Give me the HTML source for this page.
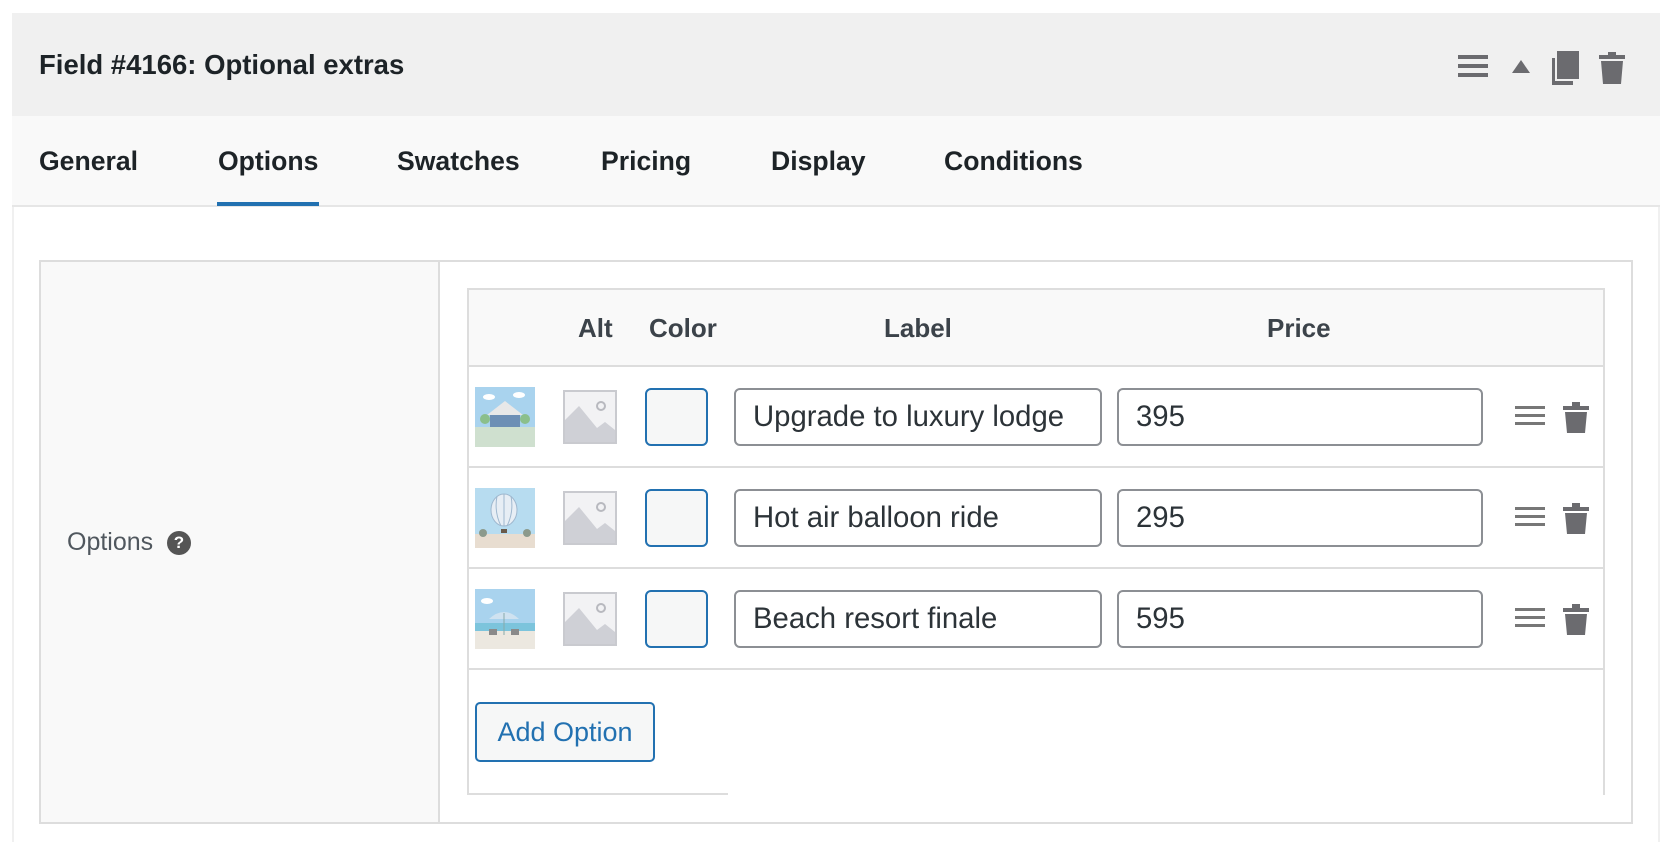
<!DOCTYPE html>
<html><head><meta charset="utf-8"><style>
*{margin:0;padding:0;box-sizing:border-box}
body{width:1674px;height:842px;background:#fff;position:relative;overflow:hidden;font-family:"Liberation Sans",sans-serif}
.a{position:absolute}
.hdr{left:12px;top:13px;width:1648px;height:103px;background:#f0f0f0}
.tabs{left:12px;top:116px;width:1648px;height:91px;background:#f9f9f9;border-bottom:2px solid #e6e6e6}
.body{left:12px;top:207px;width:1648px;height:635px;border-left:2px solid #f0f0f0;border-right:2px solid #f0f0f0}
.tab{top:146px;font-weight:bold;font-size:26.6px;color:#1d2327}
.box{left:39px;top:260px;width:1594px;height:564px;border:2px solid #ddd}
.lcol{left:41px;top:262px;width:399px;height:560px;background:#f9f9f9;border-right:2px solid #ddd}
.th{top:313px;font-weight:bold;font-size:26px;color:#3c434a}
.inp{height:58px;border:2px solid #8c8f94;border-radius:6px;background:#fff;font-size:29.3px;color:#2c3338;padding-left:17px;line-height:54px}
.sw{left:645px;width:63px;height:58px;border:2px solid #2271b1;border-radius:6px;background:#f6f7f7}
.thumb{left:475px;width:60px;height:60px}
.ph{left:563px;width:54px;height:54px}
.sep{left:468px;width:1137px;height:2px;background:#ddd}
</style></head><body>
<div class="a hdr"></div>
<div class="a" style="left:39px;top:49px;font-weight:bold;font-size:27.5px;color:#1d2327">Field #4166: Optional extras</div>
<svg class="a" style="left:1458px;top:55px" width="30" height="22"><rect y="0" width="30" height="4" fill="#6b6b6f"/><rect y="9" width="30" height="4" fill="#6b6b6f"/><rect y="18" width="30" height="4" fill="#6b6b6f"/></svg>
<svg class="a" style="left:1512px;top:60px" width="18" height="14"><path d="M9 0L18 13H0Z" fill="#6b6b6f"/></svg>
<svg class="a" style="left:1552px;top:50px" width="28" height="35"><rect x="0" y="8" width="21" height="27" fill="#6b6b6f"/><rect x="4" y="0" width="24" height="30" fill="#6b6b6f" stroke="#f0f0f0" stroke-width="2"/></svg>
<svg class="a" style="left:1598px;top:50px" width="28" height="34"><path d="M10 2h8v3h9v4H1V5h9z" fill="#6b6b6f"/><path d="M3 11h22l-2 23H5z" fill="#6b6b6f"/></svg>
<div class="a tabs"></div>
<div class="a tab" style="left:39px">General</div>
<div class="a tab" style="left:218px">Options</div>
<div class="a tab" style="left:397px">Swatches</div>
<div class="a tab" style="left:601px">Pricing</div>
<div class="a tab" style="left:771px">Display</div>
<div class="a tab" style="left:944px">Conditions</div>
<div class="a" style="left:217px;top:202px;width:102px;height:4px;background:#2271b1"></div>
<div class="a body"></div>
<div class="a box"></div>
<div class="a lcol"></div>
<div class="a" style="left:67px;top:528px;font-size:25px;color:#50575e">Options</div>
<div class="a" style="left:167px;top:531px;width:24px;height:24px;border-radius:50%;background:#555;color:#fff;font-weight:bold;font-size:17px;text-align:center;line-height:24px">?</div>
<div class="a" style="left:468px;top:288px;width:1137px;height:78px;background:#f9f9f9;border-top:2px solid #ddd"></div>
<div class="a" style="left:467px;top:288px;width:2px;height:507px;background:#ddd"></div>
<div class="a" style="left:1603px;top:288px;width:2px;height:507px;background:#ddd"></div>
<div class="a" style="left:467px;top:793px;width:261px;height:2px;background:#ddd"></div>
<div class="a th" style="left:578px">Alt</div>
<div class="a th" style="left:649px">Color</div>
<div class="a th" style="left:884px">Label</div>
<div class="a th" style="left:1267px">Price</div>
<div class="a sep" style="top:365px"></div>
<div class="a sep" style="top:466px"></div>
<div class="a sep" style="top:567px"></div>
<div class="a sep" style="top:668px"></div>

<svg class="a thumb" style="top:387px" viewBox="0 0 60 60"><rect width="60" height="60" fill="#a9d3ee"/><rect y="40" width="60" height="20" fill="#cfe0cf"/><path d="M12 28L30 14L48 28Z" fill="#e8e8e8"/><rect x="15" y="28" width="30" height="12" fill="#6d8fb5"/><circle cx="10" cy="32" r="5" fill="#8bbf8b"/><circle cx="50" cy="32" r="5" fill="#8bbf8b"/><ellipse cx="14" cy="10" rx="6" ry="3" fill="#fff"/><ellipse cx="44" cy="8" rx="6" ry="3" fill="#fff"/></svg>
<svg class="a ph" style="top:390px" viewBox="0 0 54 54"><rect x="1" y="1" width="52" height="52" fill="#f2f2f4" stroke="#c9cacf" stroke-width="2"/><path d="M2 30L16 16L34 38L42 32L52 40V52H2Z" fill="#cfd0d6"/><circle cx="38" cy="16" r="4" fill="none" stroke="#b8b9bf" stroke-width="2"/></svg>
<div class="a sw" style="top:388px"></div>
<div class="a inp" style="left:734px;top:388px;width:368px">Upgrade to luxury lodge</div>
<div class="a inp" style="left:1117px;top:388px;width:366px">395</div>
<svg class="a thumb" style="top:488px" viewBox="0 0 60 60"><rect width="60" height="60" fill="#b7dcf0"/><rect y="46" width="60" height="14" fill="#e8ddd0"/><ellipse cx="29" cy="22" rx="13" ry="16" fill="#e7eef5" stroke="#9fb8cf"/><path d="M29 6V38M22 8Q19 24 26 38M36 8Q39 24 32 38" stroke="#9fb8cf" fill="none"/><rect x="26" y="41" width="6" height="4" fill="#6a5a4a"/><circle cx="8" cy="45" r="4" fill="#8c9a8c"/><circle cx="52" cy="45" r="4" fill="#8c9a8c"/></svg>
<svg class="a ph" style="top:491px" viewBox="0 0 54 54"><rect x="1" y="1" width="52" height="52" fill="#f2f2f4" stroke="#c9cacf" stroke-width="2"/><path d="M2 30L16 16L34 38L42 32L52 40V52H2Z" fill="#cfd0d6"/><circle cx="38" cy="16" r="4" fill="none" stroke="#b8b9bf" stroke-width="2"/></svg>
<div class="a sw" style="top:489px"></div>
<div class="a inp" style="left:734px;top:489px;width:368px">Hot air balloon ride</div>
<div class="a inp" style="left:1117px;top:489px;width:366px">295</div>
<svg class="a thumb" style="top:589px" viewBox="0 0 60 60"><rect width="60" height="60" fill="#a9d3ee"/><rect y="34" width="60" height="8" fill="#7cc4dc"/><rect y="42" width="60" height="18" fill="#ece8e0"/><path d="M14 30Q29 16 44 30Z" fill="#cfe2f0"/><path d="M29 24V46" stroke="#8aa" /><rect x="14" y="40" width="8" height="6" fill="#8a8a8a"/><rect x="36" y="40" width="8" height="6" fill="#8a8a8a"/><ellipse cx="12" cy="12" rx="6" ry="3" fill="#fff"/></svg>
<svg class="a ph" style="top:592px" viewBox="0 0 54 54"><rect x="1" y="1" width="52" height="52" fill="#f2f2f4" stroke="#c9cacf" stroke-width="2"/><path d="M2 30L16 16L34 38L42 32L52 40V52H2Z" fill="#cfd0d6"/><circle cx="38" cy="16" r="4" fill="none" stroke="#b8b9bf" stroke-width="2"/></svg>
<div class="a sw" style="top:590px"></div>
<div class="a inp" style="left:734px;top:590px;width:368px">Beach resort finale</div>
<div class="a inp" style="left:1117px;top:590px;width:366px">595</div>

<svg class="a" style="left:1515px;top:406px" width="30" height="20"><rect width="30" height="3" fill="#777"/><rect y="8" width="30" height="3" fill="#777"/><rect y="16" width="30" height="3" fill="#777"/></svg>
<svg class="a" style="left:1562px;top:401px" width="28" height="32"><path d="M10 1h8v4h9v4H1V5h9z" fill="#6b6b6f"/><path d="M3 11h22l-2 21H5z" fill="#6b6b6f"/></svg>
<svg class="a" style="left:1515px;top:507px" width="30" height="20"><rect width="30" height="3" fill="#777"/><rect y="8" width="30" height="3" fill="#777"/><rect y="16" width="30" height="3" fill="#777"/></svg>
<svg class="a" style="left:1562px;top:502px" width="28" height="32"><path d="M10 1h8v4h9v4H1V5h9z" fill="#6b6b6f"/><path d="M3 11h22l-2 21H5z" fill="#6b6b6f"/></svg>
<svg class="a" style="left:1515px;top:608px" width="30" height="20"><rect width="30" height="3" fill="#777"/><rect y="8" width="30" height="3" fill="#777"/><rect y="16" width="30" height="3" fill="#777"/></svg>
<svg class="a" style="left:1562px;top:603px" width="28" height="32"><path d="M10 1h8v4h9v4H1V5h9z" fill="#6b6b6f"/><path d="M3 11h22l-2 21H5z" fill="#6b6b6f"/></svg>

<div class="a" style="left:475px;top:702px;width:180px;height:60px;border:2px solid #2271b1;border-radius:5px;background:#f6f7f7;color:#2271b1;font-size:27px;text-align:center;line-height:56px">Add Option</div>
</body></html>
